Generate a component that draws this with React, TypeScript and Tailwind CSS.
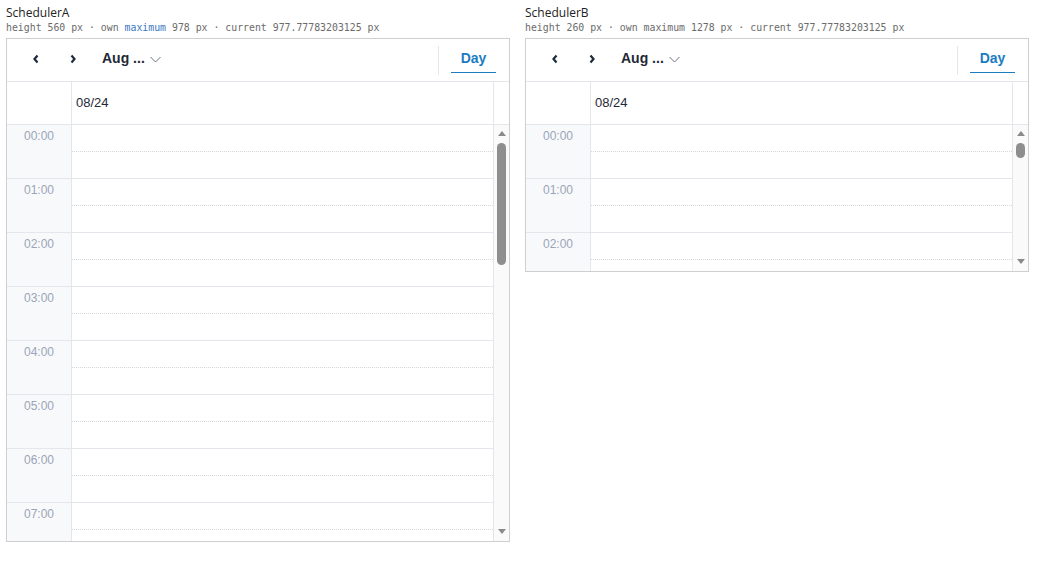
import React from "react";

const hours = Array.from({ length: 24 }, (_, i) => `${String(i).padStart(2, "0")}:00`);

function Chevron({ dir }: { dir: "left" | "right" }) {
  return (
    <svg width="8" height="10" viewBox="0 0 8 10" className="block">
      {dir === "left" ? (
        <polyline points="5.5,1.5 2.5,5 5.5,8.5" fill="none" stroke="#1e2b3c" strokeWidth="2.2" strokeLinejoin="miter" />
      ) : (
        <polyline points="2.5,1.5 5.5,5 2.5,8.5" fill="none" stroke="#1e2b3c" strokeWidth="2.2" strokeLinejoin="miter" />
      )}
    </svg>
  );
}

function Arrow({ up }: { up: boolean }) {
  return (
    <svg width="8" height="5" viewBox="0 0 8 5" className="block">
      {up ? <polygon points="0,5 4,0 8,5" fill="#8a8a8a" /> : <polygon points="0,0 8,0 4,5" fill="#8a8a8a" />}
    </svg>
  );
}

function Scheduler({ boxHeight, rows, thumb }: { boxHeight: number; rows: number; thumb: number }) {
  return (
    <div
      className="flex flex-col border border-[#cfcfcf] bg-white w-[504px]"
      style={{ height: boxHeight }}
    >
      {/* toolbar */}
      <div className="flex items-stretch h-[43px] shrink-0 border-b border-[#e3e6ea]">
        <div className="flex items-center pb-[3px]">
          <button className="w-[37px] h-full flex items-center justify-center ml-[10px]">
            <Chevron dir="left" />
          </button>
          <button className="w-[37px] h-full flex items-center justify-center">
            <Chevron dir="right" />
          </button>
          <div className="flex items-center ml-[11px] gap-[5px]">
            <span className="text-[14px] font-bold text-[#1f2937] font-['Liberation_Sans',Arial,sans-serif]">Aug ...</span>
            <svg width="11" height="7" viewBox="0 0 11 7" className="mt-[2px]">
              <polyline points="0.5,1 5.5,6 10.5,1" fill="none" stroke="#6b7280" strokeWidth="1" />
            </svg>
          </div>
        </div>
        <div className="flex-1" />
        <div className="flex items-center">
          <div className="w-px h-[29px] bg-[#e3e6ea]" />
          <div className="ml-[12px] mr-[13px] w-[45px] h-full flex flex-col">
            <div className="flex-1 flex items-center justify-center pt-[9px]">
              <span className="text-[14px] font-bold text-[#1b7cc2] font-['Liberation_Sans',Arial,sans-serif]">Day</span>
            </div>
            <div className="h-[2px] bg-[#1b7cc2] mb-[8px] mt-[3px]" />
          </div>
        </div>
      </div>
      {/* header */}
      <div className="flex h-[43px] shrink-0 border-b border-[#e3e6ea]">
        <div className="w-[65px] border-r border-[#e3e6ea]" />
        <div className="flex-1 border-r border-[#e3e6ea] flex items-center pl-[4px]">
          <span className="text-[13px] text-[#1f2937] font-['Liberation_Sans',Arial,sans-serif]">08/24</span>
        </div>
        <div className="w-[15px]" />
      </div>
      {/* body */}
      <div className="flex-1 min-h-0 flex">
        <div className="flex-1 min-w-0 overflow-hidden">
          {hours.slice(0, rows).map((h) => (
            <div key={h} className="flex h-[54px] border-b border-[#e3e6ea]">
              <div className="w-[65px] shrink-0 bg-[#f8f9fb] border-r border-[#e3e6ea] flex justify-center pt-[4px]">
                <span className="text-[12px] leading-[14px] text-[#9aa5b8] font-['Liberation_Sans',Arial,sans-serif]">{h}</span>
              </div>
              <div className="flex-1 flex flex-col border-r border-[#e3e6ea]">
                <div className="h-[27px] border-b border-dotted border-[#d4d7dc]" />
                <div className="flex-1" />
              </div>
            </div>
          ))}
        </div>
        <div className="w-[15px] shrink-0 bg-[#fafafa] flex flex-col">
          <div className="h-[15px] shrink-0 flex justify-center pt-[6px]">
            <Arrow up={true} />
          </div>
          <div className="flex-1 min-h-0 px-[3px] pt-[3px]">
            <div className="w-[9px] rounded-[4.5px] bg-[#8e8e8e]" style={{ height: thumb }} />
          </div>
          <div className="h-[15px] shrink-0 flex justify-center pt-[3px]">
            <Arrow up={false} />
          </div>
        </div>
      </div>
    </div>
  );
}

function Panel({
  name,
  height,
  max,
  highlight,
  boxHeight,
  rows,
  thumb,
}: {
  name: string;
  height: number;
  max: number;
  highlight: boolean;
  boxHeight: number;
  rows: number;
  thumb: number;
}) {
  return (
    <div className="flex flex-col">
      <div className="text-[12px] leading-[16px] text-[#222] font-['Open_Sans',sans-serif] pt-px">{name}</div>
      <div className="text-[9.85px] leading-[14px] text-[#6b6b6b] font-['DejaVu_Sans_Mono',monospace] mb-[3px] whitespace-pre">
        {`height ${height} px · own `}
        <span className={highlight ? "text-[#3b78c2]" : ""}>maximum</span>
        {` ${max} px · current 977.77783203125 px`}
      </div>
      <Scheduler boxHeight={boxHeight} rows={rows} thumb={thumb} />
    </div>
  );
}

export default function App() {
  return (
    <div className="flex gap-[15px] pl-[6px] pt-[4px] bg-white w-[1041px] h-[561px]">
      <Panel name="SchedulerA" height={560} max={978} highlight={true} boxHeight={504} rows={8} thumb={122} />
      <Panel name="SchedulerB" height={260} max={1278} highlight={false} boxHeight={234} rows={3} thumb={15} />
    </div>
  );
}
